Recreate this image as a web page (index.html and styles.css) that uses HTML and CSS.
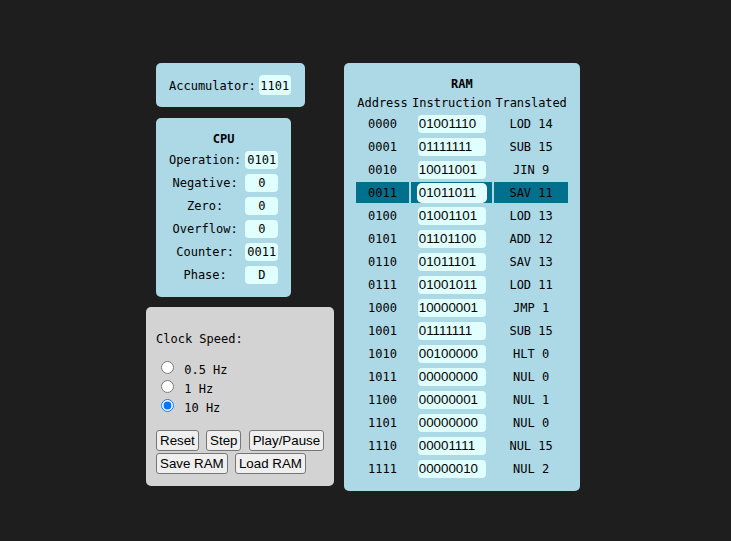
FILE: index.html
```html
<!DOCTYPE html>
<html>
<head>
<meta charset="utf-8">
<title>CPU Simulator</title>
<link rel="stylesheet" href="styles.css">
</head>
<body>
<div class="app">
  <div class="left">
    <div class="box acc">
      <span class="acc-label">Accumulator:</span><input class="reg acc-reg" value="1101">
    </div>
    <div class="box cpu">
      <table class="cpu-table">
        <caption>CPU</caption>
        <tr><td class="lbl">Operation:</td><td class="in"><input class="reg" value="0101"></td></tr>
        <tr><td class="lbl">Negative:</td><td class="in"><input class="reg" value="0"></td></tr>
        <tr><td class="lbl">Zero:</td><td class="in"><input class="reg" value="0"></td></tr>
        <tr><td class="lbl">Overflow:</td><td class="in"><input class="reg" value="0"></td></tr>
        <tr><td class="lbl">Counter:</td><td class="in"><input class="reg" value="0011"></td></tr>
        <tr><td class="lbl">Phase:</td><td class="in"><input class="reg" value="D"></td></tr>
      </table>
    </div>
    <div class="clock">
      <div class="clock-title">Clock Speed:</div>
      <div class="radios">
        <label><input type="radio" name="hz"> 0.5 Hz</label><br>
        <label><input type="radio" name="hz"> 1 Hz</label><br>
        <label><input type="radio" name="hz" checked> 10 Hz</label>
      </div>
      <div class="buttons">
        <button>Reset</button> <button>Step</button> <button>Play/Pause</button><br>
        <button>Save RAM</button> <button>Load RAM</button>
      </div>
    </div>
  </div>
  <div class="box ram">
    <table class="ram-table">
      <caption>RAM</caption>
      <tr class="hdr"><td class="c1">Address</td><td class="c2">Instruction</td><td class="c3">Translated</td></tr>
      <tr><td>0000</td><td class="in"><input class="ins" value="01001110"></td><td>LOD 14</td></tr>
      <tr><td>0001</td><td class="in"><input class="ins" value="01111111"></td><td>SUB 15</td></tr>
      <tr><td>0010</td><td class="in"><input class="ins" value="10011001"></td><td>JIN 9</td></tr>
      <tr class="cur"><td>0011</td><td class="in"><input class="ins" value="01011011"></td><td>SAV 11</td></tr>
      <tr><td>0100</td><td class="in"><input class="ins" value="01001101"></td><td>LOD 13</td></tr>
      <tr><td>0101</td><td class="in"><input class="ins" value="01101100"></td><td>ADD 12</td></tr>
      <tr><td>0110</td><td class="in"><input class="ins" value="01011101"></td><td>SAV 13</td></tr>
      <tr><td>0111</td><td class="in"><input class="ins" value="01001011"></td><td>LOD 11</td></tr>
      <tr><td>1000</td><td class="in"><input class="ins" value="10000001"></td><td>JMP 1</td></tr>
      <tr><td>1001</td><td class="in"><input class="ins" value="01111111"></td><td>SUB 15</td></tr>
      <tr><td>1010</td><td class="in"><input class="ins" value="00100000"></td><td>HLT 0</td></tr>
      <tr><td>1011</td><td class="in"><input class="ins" value="00000000"></td><td>NUL 0</td></tr>
      <tr><td>1100</td><td class="in"><input class="ins" value="00000001"></td><td>NUL 1</td></tr>
      <tr><td>1101</td><td class="in"><input class="ins" value="00000000"></td><td>NUL 0</td></tr>
      <tr><td>1110</td><td class="in"><input class="ins" value="00001111"></td><td>NUL 15</td></tr>
      <tr><td>1111</td><td class="in"><input class="ins" value="00000010"></td><td>NUL 2</td></tr>
    </table>
  </div>
</div>
</body>
</html>
```

FILE: styles.css
```css
body {
  margin: 0;
  background: #1e1e1e;
  font-family: "DejaVu Sans Mono", "Liberation Mono", monospace;
  font-size: 12px;
  color: #000;
}

.app {
  display: flex;
  align-items: flex-start;
  gap: 10px;
  padding: 63px 0 0 146px;
}

.left {
  width: 188px;
  display: flex;
  flex-direction: column;
  align-items: flex-start;
}

.box {
  background: #add8e6;
  border-radius: 5px;
}

.reg {
  box-sizing: border-box;
  border: none;
  border-radius: 4px;
  background: #e0ffff;
  font-family: "DejaVu Sans Mono", "Liberation Mono", monospace;
  font-size: 12px;
  color: #000;
  text-align: center;
  padding: 1px 0 0;
  outline: none;
}

.acc {
  margin: 0 0 11px 10px;
  display: flex;
  align-items: center;
  padding: 12px 14px 12px 13px;
}

.acc-label {
  line-height: 14px;
  padding-top: 2px;
}

.acc-reg {
  margin-left: 3px;
  width: 32px;
  height: 20px;
  padding-top: 2px;
}

.cpu {
  margin: 0 0 10px 10px;
  padding: 12px 10px 10px;
}

table {
  border-collapse: separate;
  border-spacing: 2px;
}

caption {
  font-weight: bold;
  line-height: 15px;
  padding-top: 2px;
}

tr {
  height: 21px;
}

td {
  padding: 2px 1px 0;
  line-height: 19px;
  vertical-align: middle;
  white-space: nowrap;
}

td.in {
  padding: 0 1px;
  line-height: 21px;
}

.cpu-table .lbl {
  text-align: center;
  min-width: 72px;
}

.cpu-table .reg {
  display: block;
  width: 33px;
  height: 18px;
}

.ram {
  padding: 12px 10px 10px;
}

.ram-table td {
  text-align: center;
}

.ram-table .hdr {
  height: 17px;
}

.ram-table .hdr td {
  padding-top: 2px;
  line-height: 15px;
}

.ram-table .c1 { width: 51px; }
.ram-table .c2 { width: 79px; }
.ram-table .c3 { width: 71px; letter-spacing: -0.1px; }

.ins {
  display: block;
  margin: 0 auto;
  box-sizing: border-box;
  width: 68px;
  height: 18px;
  border: none;
  border-radius: 4px;
  background: #e0ffff;
  font-family: "Liberation Sans", Arial, sans-serif;
  font-size: 13.333px;
  color: #000;
  padding: 0 1px;
  text-align: left;
  outline: none;
}

.cur td {
  background: #00708c;
}

.cur .ins {
  box-shadow: 0 0 0 1px #f4ffff;
}

.clock {
  width: 188px;
  box-sizing: border-box;
  background: #d3d3d3;
  border-radius: 5px;
  padding: 25px 10px 11px;
  line-height: 14px;
}

.clock-title {
  margin-bottom: 12px;
}

.radios {
  margin-bottom: 14px;
}

.radios input {
  width: 13px;
  height: 13px;
  margin: 3px 3px 0 5px;
}

.buttons {
  white-space: nowrap;
}

button {
  font-family: "Liberation Sans", Arial, sans-serif;
  font-size: 13.333px;
  line-height: normal;
  color: #000;
  background: #efefef;
  border: 1px solid #767676;
  border-radius: 3px;
  padding: 2px 3px;
  margin: 1px 0;
}
```
